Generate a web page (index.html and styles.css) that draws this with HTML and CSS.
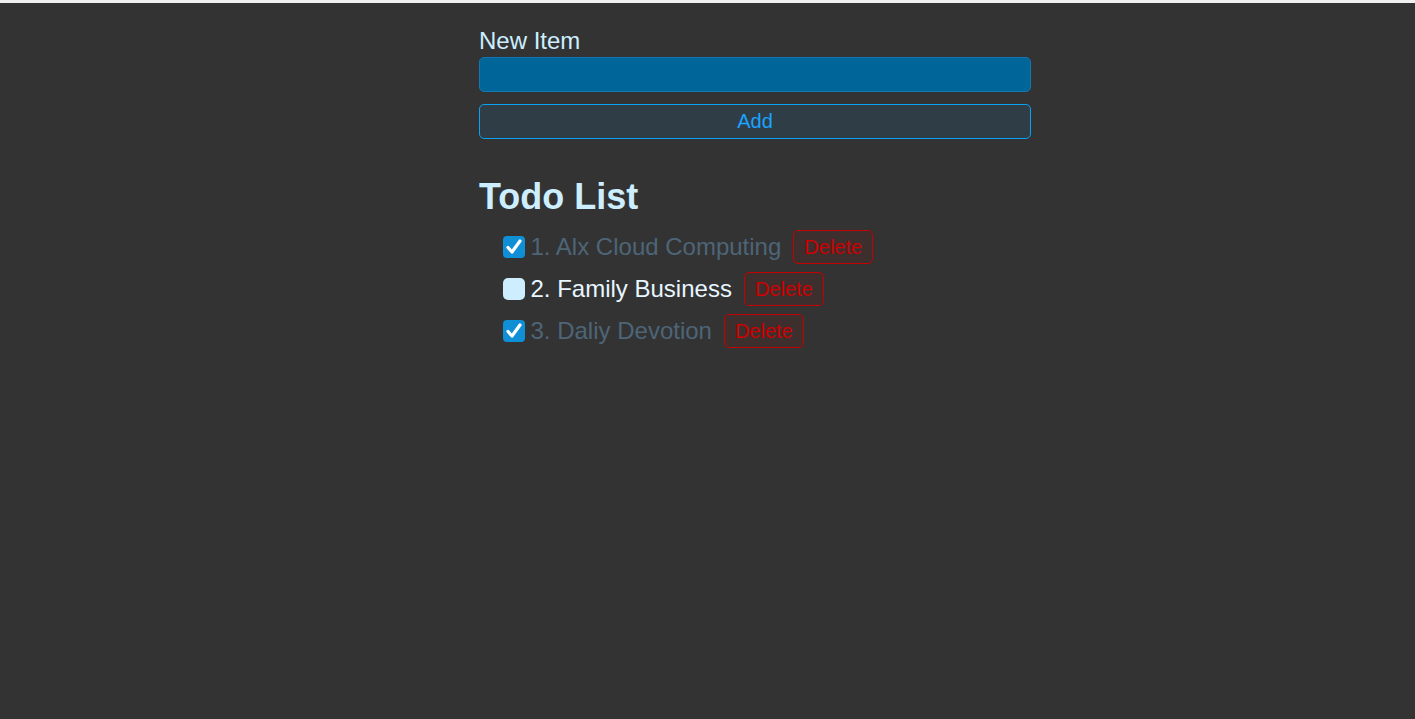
FILE: index.html
```html
<!DOCTYPE html>
<html lang="en">
<head>
<meta charset="utf-8">
<title>Todo List</title>
<link rel="stylesheet" href="styles.css">
</head>
<body>
<div class="topstrip"></div>
<main class="app">
  <form class="new-item-form">
    <div class="form-row">
      <label class="label" for="item">New Item</label>
      <input class="text-input" type="text" id="item">
    </div>
    <button class="btn btn-add" type="button">Add</button>
  </form>
  <h1 class="header">Todo List</h1>
  <ul class="list">
    <li class="item">
      <input class="check" type="checkbox" checked>
      <span class="item-text done">1. Alx Cloud Computing</span>
      <button class="btn btn-danger" type="button">Delete</button>
    </li>
    <li class="item">
      <input class="check" type="checkbox">
      <span class="item-text">2. Family Business</span>
      <button class="btn btn-danger" type="button">Delete</button>
    </li>
    <li class="item">
      <input class="check" type="checkbox" checked>
      <span class="item-text done">3. Daliy Devotion</span>
      <button class="btn btn-danger" type="button">Delete</button>
    </li>
  </ul>
</main>
</body>
</html>
```
FILE: styles.css
```css
* { box-sizing: border-box; }
html, body { margin: 0; padding: 0; }
body {
  background: #333333;
  font-family: Arial, "Liberation Sans", sans-serif;
  color: #cdeeff;
  min-height: 719px;
}
.topstrip {
  height: 3px;
  background: #f0f0f0;
}
.app {
  width: 552px;
  margin-left: 479px;
  padding-top: 24px;
}
.new-item-form {
  display: flex;
  flex-direction: column;
  gap: 12px;
}
.form-row {
  display: flex;
  flex-direction: column;
  gap: 3px;
}
.label {
  font-size: 24px;
  line-height: 27px;
  color: #cdeeff;
}
.text-input {
  width: 100%;
  height: 35px;
  background: #006699;
  border: 1px solid #1577b0;
  border-radius: 5px;
  outline: none;
  color: #cdeeff;
  font-size: 20px;
  font-family: inherit;
  padding: 0 8px;
}
.btn {
  font-family: Arial, "Liberation Sans", sans-serif;
  font-size: 20px;
  border-radius: 5px;
  cursor: pointer;
}
.btn-add {
  width: 100%;
  height: 35px;
  background: #2e3d46;
  border: 1px solid #0aa2f5;
  color: #1aa3ff;
  padding: 0;
}
.header {
  margin: 37px 0 0;
  font-size: 36px;
  line-height: 41px;
  font-weight: bold;
  color: #cdeeff;
}
.list {
  list-style: none;
  margin: 13px 0 0;
  padding: 0 0 0 24px;
  display: flex;
  flex-direction: column;
  gap: 8px;
}
.item {
  display: flex;
  align-items: center;
  height: 34px;
}
.check {
  appearance: none;
  -webkit-appearance: none;
  width: 22px;
  height: 22px;
  margin: 0;
  border-radius: 5px;
  background: #cdeeff;
  flex: none;
}
.check:checked {
  border-radius: 4px;
  background-color: #0f8fd6;
  background-image: url("data:image/svg+xml,%3Csvg xmlns='http://www.w3.org/2000/svg' viewBox='0 0 22 22'%3E%3Cpath d='M5 11.5 L9 16 L17 5' fill='none' stroke='white' stroke-width='3.2' stroke-linecap='round' stroke-linejoin='round'/%3E%3C/svg%3E");
  background-size: 22px 22px;
}
.item-text {
  margin-left: 5.5px;
  font-size: 24px;
  line-height: 28px;
  color: #e8f6ff;
}
.item-text.done {
  color: #4d6577;
}
.btn-danger {
  margin-left: 12px;
  height: 34px;
  padding: 0 10px;
  background: #3e2f2f;
  border: 1px solid #c40000;
  color: #cc0000;
}
```
